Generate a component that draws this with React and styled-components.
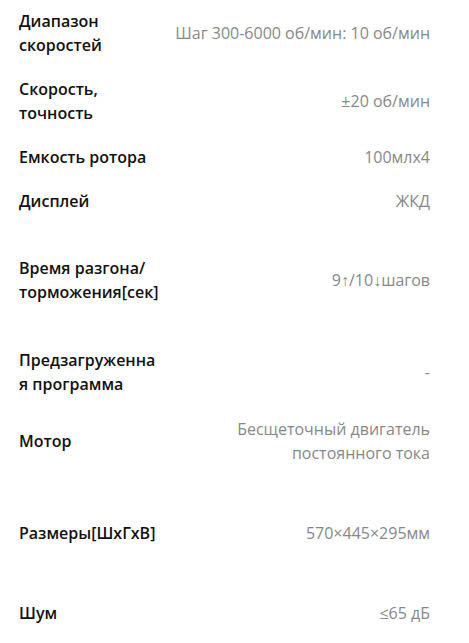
import React from "react";
import styled, { createGlobalStyle } from "styled-components";

const Global = createGlobalStyle`
  html, body { margin: 0; padding: 0; background: #fff; }
  body { font-family: "Open Sans", "Noto Sans", sans-serif; }
`;

const Table = styled.div`
  display: flex;
  flex-direction: column;
  padding: 9px 39px 0 19px;
`;

const Row = styled.div`
  display: grid;
  grid-template-columns: 140px 1fr;
  column-gap: 10px;
  align-items: center;
  margin-top: ${(p) => p.$gap}px;
`;

const Label = styled.div`
  font-size: 16px;
  line-height: 24px;
  font-weight: 600;
  color: #111;
  overflow-wrap: anywhere;
`;

const Value = styled.div`
  font-size: 16px;
  line-height: 24px;
  font-weight: 400;
  color: #888;
  text-align: right;
`;

const rows = [
  { l: "Диапазон скоростей", v: "Шаг 300-6000 об/мин: 10 об/мин", g: 0 },
  { l: "Скорость, точность", v: "±20 об/мин", g: 20 },
  { l: "Емкость ротора", v: "100млx4", g: 20 },
  { l: "Дисплей", v: "ЖКД", g: 20 },
  { l: "Время разгона/торможения[сек]", v: "9↑/10↓шагов", g: 43 },
  { l: "Предзагруженная программа", v: "-", g: 44 },
  { l: "Мотор", v: "Бесщеточный двигатель постоянного тока", g: 21 },
  { l: "Размеры[ШхГхВ]", v: "570×445×295мм", g: 56 },
  { l: "Шум", v: "≤65 дБ", g: 56 },
];

export default function App() {
  return (
    <>
      <Global />
      <Table>
        {rows.map((r, i) => (
          <Row key={i} $gap={r.g}>
            <Label>{r.l}</Label>
            <Value>{r.v}</Value>
          </Row>
        ))}
      </Table>
    </>
  );
}
